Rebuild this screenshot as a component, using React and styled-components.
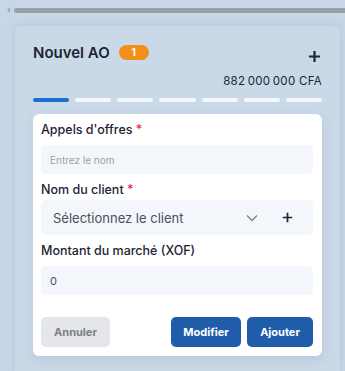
import styled, { createGlobalStyle } from "styled-components";

const GlobalStyle = createGlobalStyle`
  html, body {
    margin: 0;
    padding: 0;
    background: #c8d7e7;
    font-family: "Inter", "Noto Sans", sans-serif;
  }
`;

const Page = styled.div`
  width: 345px;
  height: 371px;
  overflow: hidden;
  display: flex;
  flex-direction: column;
`;

const ScrollBar = styled.div`
  display: flex;
  align-items: center;
  gap: 4px;
  height: 10px;
  padding: 5px 0 0 7px;
`;

const Arrow = styled.div`
  width: 0;
  height: 0;
  border-top: 3px solid transparent;
  border-bottom: 3px solid transparent;
  border-right: 3px solid #a2a8b0;
`;

const Thumb = styled.div`
  flex: 1;
  height: 5px;
  border-radius: 3px 0 0 3px;
  background: #9ba1a9;
`;

const Column = styled.div`
  margin: 11px 5px 0 15px;
  background: #cad9e8;
  border-radius: 6px 6px 0 0;
  box-shadow: 0 0 8px rgba(120, 140, 170, 0.25);
  padding: 16px 18px 0 18px;
  flex: 1;
`;

const Header = styled.div`
  display: flex;
  align-items: center;
  justify-content: space-between;
  height: 20px;
`;

const Title = styled.div`
  display: flex;
  align-items: center;
  gap: 9px;
  font-size: 15px;
  font-weight: 600;
  color: #1d2433;
`;

const Badge = styled.span`
  background: #f08f1a;
  color: #fff;
  font-size: 10px;
  font-weight: 700;
  border-radius: 8px;
  width: 30px;
  height: 15px;
  display: inline-flex;
  align-items: center;
  justify-content: center;
`;

const Plus = styled.svg`
  width: ${(p) => p.size}px;
  height: ${(p) => p.size}px;
  display: block;
`;

const HeaderAction = styled.div`
  margin-top: 8px;
  margin-right: 1px;
`;

const Amount = styled.div`
  text-align: right;
  font-size: 11.5px;
  color: #1d2433;
  margin-top: 12px;
  letter-spacing: 0.3px;
`;

const Steps = styled.div`
  display: flex;
  gap: 6px;
  margin-top: 10px;
`;

const Step = styled.div`
  flex: 1;
  height: 4px;
  border-radius: 2px;
  background: ${(p) => (p.active ? "#1a70cd" : "#f3f6fb")};
`;

const Form = styled.div`
  margin-top: 12px;
  background: #fff;
  border-radius: 6px;
  padding: 8px 9px 9px 8px;
  box-shadow: 0 4px 12px rgba(60, 80, 110, 0.12);
  display: flex;
  flex-direction: column;
`;

const Label = styled.div`
  font-size: 12.5px;
  font-weight: 500;
  color: #1d2433;
  margin: ${(p) => (p.first ? "0" : "8px")} 0 ${(p) => (p.tight ? "3px" : "8px")} 0;

  span {
    color: #e5274a;
  }
`;

const Field = styled.div`
  background: #f3f6fa;
  border-radius: 5px;
  height: ${(p) => p.h}px;
  display: flex;
  align-items: center;
  padding: 0 9px;
  font-size: ${(p) => p.fs}px;
  color: ${(p) => p.color};
`;

const Select = styled(Field)`
  padding: 0 20px 0 12px;
  justify-content: space-between;
`;

const SelectIcons = styled.div`
  display: flex;
  align-items: center;
  gap: 24px;
`;

const Buttons = styled.div`
  display: flex;
  align-items: center;
  margin-top: 22px;
  gap: 6px;
`;

const Button = styled.button`
  border: none;
  border-radius: 5px;
  height: 30px;
  width: ${(p) => p.w}px;
  font-family: inherit;
  font-size: 11px;
  font-weight: 700;
  background: ${(p) => (p.ghost ? "#e4e6ea" : "#1f5dab")};
  color: ${(p) => (p.ghost ? "#7a7f88" : "#fff")};
  margin-right: ${(p) => (p.spaced ? "auto" : "0")};
`;

const PlusIcon = ({ size = 14, stroke = 2.4 }) => (
  <Plus size={size} viewBox="0 0 14 14">
    <path d="M7 1v12M1 7h12" stroke="#1d2433" strokeWidth={stroke} fill="none" />
  </Plus>
);

export default function App() {
  return (
    <Page>
      <GlobalStyle />
      <ScrollBar>
        <Arrow />
        <Thumb />
      </ScrollBar>
      <Column>
        <Header>
          <Title>
            Nouvel AO <Badge>1</Badge>
          </Title>
          <HeaderAction>
            <PlusIcon size={13} />
          </HeaderAction>
        </Header>
        <Amount>882{"\u202f"}000{"\u202f"}000 CFA</Amount>
        <Steps>
          {[0, 1, 2, 3, 4, 5, 6].map((i) => (
            <Step key={i} active={i === 0} />
          ))}
        </Steps>
        <Form>
          <Label first>
            Appels d'offres <span>*</span>
          </Label>
          <Field h={29} fs={10} color="#9aa1ad">
            Entrez le nom
          </Field>
          <Label tight>
            Nom du client <span>*</span>
          </Label>
          <Select h={35} fs={13} color="#4a5060">
            Sélectionnez le client
            <SelectIcons>
              <svg width="12" height="8" viewBox="0 0 12 8">
                <path d="M1 1.5l5 5 5-5" stroke="#7a8090" strokeWidth="1.3" fill="none" />
              </svg>
              <PlusIcon size={11} stroke={2.2} />
            </SelectIcons>
          </Select>
          <Label>Montant du marché (XOF)</Label>
          <Field h={29} fs={11} color="#4a5060">
            0
          </Field>
          <Buttons>
            <Button ghost spaced w={69}>
              Annuler
            </Button>
            <Button w={70}>Modifier</Button>
            <Button w={66}>Ajouter</Button>
          </Buttons>
        </Form>
      </Column>
    </Page>
  );
}
